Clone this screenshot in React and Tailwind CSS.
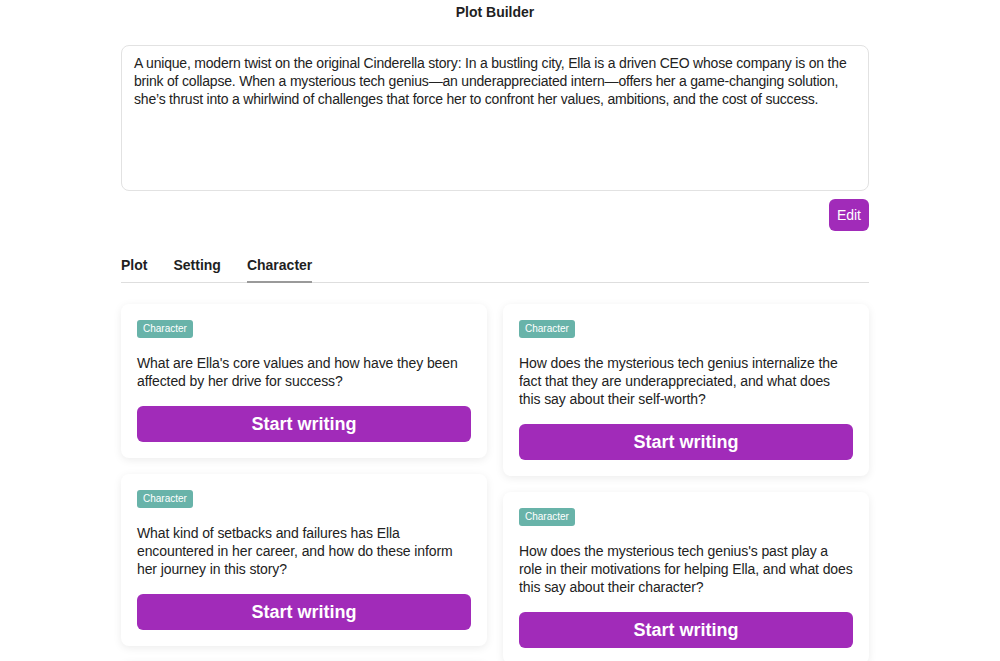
import React from 'react';

const summary =
  "A unique, modern twist on the original Cinderella story: In a bustling city, Ella is a driven CEO whose company is on the brink of collapse. When a mysterious tech genius\u2014an underappreciated intern\u2014offers her a game-changing solution, she\u2019s thrust into a whirlwind of challenges that force her to confront her values, ambitions, and the cost of success.";

const leftCards = [
  "What are Ella's core values and how have they been affected by her drive for success?",
  "What kind of setbacks and failures has Ella encountered in her career, and how do these inform her journey in this story?",
  "How does Ella's relationship with her stepfamily shape the way she leads her company?",
];

const rightCards = [
  "How does the mysterious tech genius internalize the fact that they are underappreciated, and what does this say about their self-worth?",
  "How does the mysterious tech genius's past play a role in their motivations for helping Ella, and what does this say about their character?",
  "What does Ella fear losing the most, and how does that fear drive her decisions?",
];

function PromptCard({ text }) {
  return (
    <div className="bg-white rounded-lg shadow-[0_2px_8px_rgba(0,0,0,0.08)] p-4">
      <div className="w-fit bg-[#68b3a9] text-white text-[10px] leading-[18px] px-[6px] rounded-[3px]">
        Character
      </div>
      <p className="mt-4 text-[14px] leading-[18px] tracking-[-0.1px] text-[#222]">{text}</p>
      <button className="mt-4 w-full h-9 rounded-md bg-[#a12bb9] text-white text-[18px] font-bold">
        Start writing
      </button>
    </div>
  );
}

export default function App() {
  return (
    <div className="h-[661px] overflow-hidden bg-white font-['Liberation_Sans',Arial,sans-serif] text-[#1f1f1f]">
      <div className="w-[748px] ml-[121px]">
        <h1 className="text-center text-[14px] font-bold leading-[24px]">Plot Builder</h1>

        <div className="mt-[21px] h-[146px] border border-[#e2e2e2] rounded-lg px-3 py-[8px] text-[14px] leading-[18px] tracking-[-0.2px] text-[#222]">
          {summary}
        </div>

        <div className="flex justify-end mt-2">
          <button className="h-8 px-2 rounded-md bg-[#a12bb9] text-white text-[14px]">Edit</button>
        </div>

        <div className="mt-[25px] flex gap-[26px] border-b border-[#dedede] text-[14px] font-bold">
          <div className="pb-[8px] leading-[18px]">Plot</div>
          <div className="pb-[8px] leading-[18px]">Setting</div>
          <div className="pb-[7px] leading-[18px] border-b-2 border-[#9a9a9a] -mb-px">Character</div>
        </div>

        <div className="mt-[21px] flex gap-4 items-start">
          <div className="flex-1 flex flex-col gap-4">
            {leftCards.map((t) => (
              <PromptCard key={t} text={t} />
            ))}
          </div>
          <div className="flex-1 flex flex-col gap-4">
            {rightCards.map((t) => (
              <PromptCard key={t} text={t} />
            ))}
          </div>
        </div>
      </div>
    </div>
  );
}
